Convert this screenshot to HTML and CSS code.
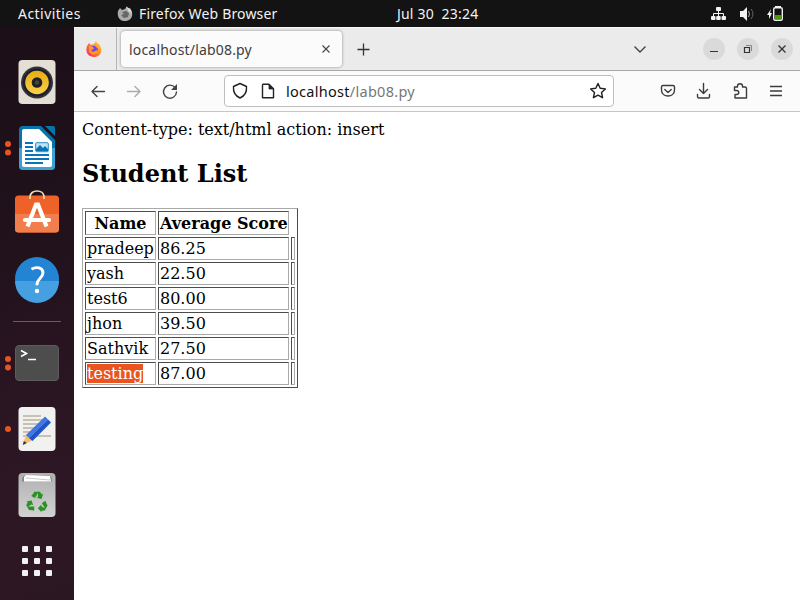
FILE: index.html
```html
<!DOCTYPE html>
<html lang="en">
<head>
<meta charset="utf-8">
<title>localhost/lab08.py</title>
<link rel="stylesheet" href="styles.css">
</head>
<body>
<header class="topbar">
  <span class="activities">Activities</span>
  <svg class="app-icon" width="16" height="16" viewBox="0 0 16 16"><path fill="#aaa" d="M1 5 3 2l2 2 3-1 2-3 1 3 2-1c5 7 1 13-5 13C2 15 0 10 1 5Z"/><path fill="#666" d="m5 6 4-1 3 2-1 4-4 1-3-3 3-1Z"/><path fill="#ddd" d="m9 1 2 3 1 3 1-2 1 4C16 5 13 2 9 1Z"/></svg>
  <span class="app-name">Firefox Web Browser</span>
  <span class="clock">Jul 30&nbsp; 23:24</span>
  <svg class="tray" width="76" height="18" viewBox="0 0 76 18">
    <g fill="#f2f2f2"><rect x="5" y="2" width="5" height="4" rx="1"/><rect y="11" width="4.500" height="4" rx="1"/><rect x="5.200" y="11" width="4.500" height="4" rx="1"/><rect x="10.500" y="11" width="4.500" height="4" rx="1"/><path d="M29 6h3l4-4v14l-4-4h-3Z"/><path d="m60 4-4 6h2v4l3-6h-2Z"/></g>
    <path fill="none" stroke="#f2f2f2" d="M7.500 5v6M2.500 11V8.500h10V11"/>
    <path fill="none" stroke="#aaa" d="M37.500 6q2 3 0 6"/><path fill="none" stroke="#666" d="M40 4q4 5 0 10"/>
    <path fill="#f2f2f2" d="M64 1h6v2h-6z"/><rect x="62.700" y="2.700" width="8.600" height="12.600" rx="1.500" fill="none" stroke="#f2f2f2" stroke-width="1.400"/><path fill="#4e9a06" d="M64 10h6v4h-6z"/>
  </svg>
</header>
<div class="desktop">
<nav class="dock">
  <svg class="launcher" viewBox="0 0 74 44"><defs><linearGradient id="gold" x2="0" y2="1"><stop stop-color="#e6ad12"/><stop offset="1" stop-color="#f9d14c"/></linearGradient></defs><rect x="18.500" y="0" width="37" height="44" rx="4" fill="#e3dfd4"/><circle cx="37" cy="22.500" r="16" fill="#34323a"/><circle cx="37" cy="22.500" r="14" fill="#1c202c"/><circle cx="37" cy="22.500" r="11.800" fill="url(#gold)"/><circle cx="37" cy="22.500" r="5.300" fill="#202020"/><circle cx="37" cy="22.500" r="2.200" fill="#454545"/></svg>
  <svg class="launcher" viewBox="0 0 74 44"><g fill="#e95420"><circle cx="8" cy="18" r="3"/><circle cx="8" cy="26.500" r="3"/></g><path fill="#0875aa" d="M23 0h18l14 14v26q0 4-4 4H23q-4 0-4-4V4q0-4 4-4Z"/><path fill="#38a3d4" d="M19 22h36v18q0 4-4 4H23q-4 0-4-4Z"/><path fill="#fff" d="M24 3h15l13 13v23q0 2-2 2H24q-2 0-2-2V5q0-2 2-2Z"/><path fill="#0875aa" d="M45 0h8q2 0 2 2v8Z"/><path stroke="#0875b8" stroke-width="2" d="M25 17h8m-8 4h8m-8 4h8m-8 4h24m-24 4h24m-24 4h18"/><rect x="35.700" y="16.700" width="12.600" height="9" rx="1" fill="#c2e3f4" stroke="#278bc0"/><path fill="#0875b8" d="m36 25v-2l4-4 3 3 2-2 3 3v2Z"/></svg>
  <svg class="launcher" viewBox="0 0 74 44"><g transform="translate(0 -2)"><rect x="15" y="5.500" width="44" height="37" rx="3.500" fill="#ee6229"/><path fill="#f27d4d" d="M15 24h44v15q0 3.500-3.500 3.500h-37Q15 42.500 15 39Z"/><path fill="none" stroke="#f5ddb0" stroke-width="1.700" d="M30 9V7c0-8 14-8 14 0v2"/><g fill="none" stroke="#fff" stroke-width="4.200"><path d="m27.500 36.500 8.500-22h2l8.500 22"/><path stroke-linecap="round" d="M25 30h24"/></g></g></svg>
  <svg class="launcher" viewBox="0 0 74 44"><g transform="translate(0 -1)"><circle cx="37" cy="22" r="22" fill="#2484d4"/><path d="M15 24a22 22 0 0 0 44 0Z" fill="#45a0e1"/><path fill="none" stroke="#fff" stroke-width="2.900" d="M31.500 12.200c5-3 11.500-1.600 11.500 3.500 0 5-6 6-6 11.500v1"/><circle cx="37" cy="34" r="2.200" fill="#fff"/></g></svg>
  <div class="separator"></div>
  <svg class="launcher" viewBox="0 0 74 44"><g fill="#e95420"><circle cx="8" cy="18" r="3"/><circle cx="8" cy="26.500" r="3"/></g><rect x="15.500" y="4.500" width="43" height="35" rx="3.500" fill="#4d4d4d" stroke="#5c5c5c"/><path fill="none" stroke="#fff" stroke-width="1.600" d="m21 9.500 5.500 3-5.500 3M28 18.500h8"/></svg>
  <svg class="launcher" viewBox="0 0 74 44"><circle cx="8" cy="22" r="3" fill="#e95420"/><rect x="18.500" y="0" width="37" height="44" rx="4" fill="#f1f1f0"/><path stroke="#c5c2b5" stroke-width="2" d="M23 9h18m-18 4h22m-22 4h20m-20 4h20m-20 4h15m-15 4h28"/><path fill="#f3bd76" d="m26 27-3 11 10-5Z"/><path fill="#333" d="m23.800 34-1 4 4-2Z"/><path fill="#3f76e6" d="m26 28 19-18.500 3 3L29 31Z"/><path fill="#1f54c8" d="M29 31 48 12.500l3 3L32.500 34Z"/></svg>
  <svg class="launcher" viewBox="0 0 74 44"><defs><linearGradient id="bin" x2="0" y2="1"><stop stop-color="#b0b0b0"/><stop offset="1" stop-color="#d2d2d2"/></linearGradient></defs><rect x="18.500" y="0" width="37" height="44" rx="4" fill="url(#bin)"/><path fill="#858585" d="M22 8.500q0-6 3-6h24q3 0 3 6Z"/><path fill="#fff" d="M24 8.500V4l2-2 24 1 1 5.500Z"/><path fill="none" stroke="#bbb" stroke-width=".8" d="m26 5 24 2"/>
    <g fill="#2a9224"><g id="arm"><path d="m32.600 21.500 1.800-2.700h4.200l-3.600 6.300-3.800-2.200Z"/><path d="M38 18.800h2l1.800 2.700 1.400-.8-1.700 5.200-5-1.100 1.500-.9Z"/></g><use href="#arm" transform="rotate(120 37 29.500)"/><use href="#arm" transform="rotate(240 37 29.500)"/></g></svg>
  <svg class="launcher" viewBox="0 0 74 44"><g fill="#f2f2f2"><rect x="22" y="7" width="6" height="6" rx="1"/><rect x="34" y="7" width="6" height="6" rx="1"/><rect x="46" y="7" width="6" height="6" rx="1"/><rect x="22" y="19" width="6" height="6" rx="1"/><rect x="34" y="19" width="6" height="6" rx="1"/><rect x="46" y="19" width="6" height="6" rx="1"/><rect x="22" y="31" width="6" height="6" rx="1"/><rect x="34" y="31" width="6" height="6" rx="1"/><rect x="46" y="31" width="6" height="6" rx="1"/></g></svg>
</nav>
<main class="browser">
  <div class="tabstrip">
    <div class="pinned"><svg width="16" height="16" viewBox="0 0 16 16"><defs><linearGradient id="fox" x1="1" x2="0" y2="1"><stop stop-color="#ffe43b"/><stop offset=".45" stop-color="#ff842b"/><stop offset="1" stop-color="#f51c67"/></linearGradient></defs><path fill="url(#fox)" d="M1 5 3 2l2 2 3-1 2-3 1 2 2 1c5 7 1 13-5 13C2 16-1 11 1 5Z"/><path fill="#7545dc" d="m6 5 3 0 3 3-2 4-4 0-2-3 3-1Z"/><path fill="#ff9828" d="m3 5 4 1 1 2-3 1 2 2 4-2 1 3-5 2-4-3Z"/></svg></div>
    <div class="tab"><span class="tab-title">localhost/lab08.py</span><svg width="10" height="10" viewBox="0 0 10 10"><path d="m1.500 1.500 7 7m0-7-7 7" stroke="#444" stroke-width="1.100"/></svg></div>
    <svg class="newtab" width="14" height="14" viewBox="0 0 14 14"><path d="M7.500 1.500v12M1.500 7.500h12" stroke="#333" stroke-width="1.300"/></svg>
    <svg class="alltabs" width="14" height="9" viewBox="0 0 14 9"><path d="m1.500 1.500 5.500 5.500 5.500-5.500" fill="none" stroke="#444" stroke-width="1.400"/></svg>
    <div class="window-buttons">
      <span class="wbtn"><svg viewBox="0 0 22 22"><path d="M7 13.500h8" stroke="#333"/></svg></span>
      <span class="wbtn"><svg viewBox="0 0 22 22"><path d="M7.500 9.500h5v5h-5Z" fill="none" stroke="#333" stroke-width="1.200"/><path d="M9 7.500h5.500V13" fill="none" stroke="#888"/></svg></span>
      <span class="wbtn"><svg viewBox="0 0 22 22"><path d="m7.500 7.500 7 7m0-7-7 7" stroke="#333" stroke-width="1.300"/></svg></span>
    </div>
  </div>
  <div class="toolbar">
    <svg class="nav-icons" width="90" height="18" viewBox="0 0 90 18" fill="none" stroke="#444" stroke-width="1.400" stroke-linecap="round" stroke-linejoin="round"><path d="M14.500 9.500H2m5-5-5 5 5 5"/><path stroke="#aaa" d="M37.500 9.500H50m-5-5 5 5-5 5"/><path d="M86.500 10a6.500 6.500 0 1 1-1.500-4.500"/><path fill="#444" stroke="none" d="M87 2v6h-6Z"/></svg>
    <div class="urlbar">
      <svg class="shield" width="44" height="18" viewBox="0 0 44 18" fill="none" stroke="#222" stroke-width="1.400" stroke-linejoin="round"><path d="M8 1.500 14.500 4.500C15 10 12.500 14 8 16 3.500 14 1 10 1.500 4.500Z"/><path d="M31 2.200h6l4.500 4.500v9H30.500V3Z"/><path fill="#222" stroke-width=".8" d="M37 2.500v4.500h4.500Z"/></svg>
      <span class="url"><b>localhost</b>/lab08.py</span>
      <svg class="star" width="18" height="18" viewBox="0 0 18 18"><path d="m9 1.500 2.200 4.800 5.200.6-3.900 3.600 1.100 5.200L9 13.100l-4.600 2.600 1.100-5.200L1.600 6.900l5.200-.6Z" fill="none" stroke="#222" stroke-width="1.400" stroke-linejoin="round"/></svg>
    </div>
    <svg class="tool-icons" width="124" height="18" viewBox="0 0 124 18" fill="none" stroke="#3c3c3c" stroke-width="1.400" stroke-linecap="round" stroke-linejoin="round"><path d="M3 3.500h10q1.500 0 1.500 1.500v3c0 8-13 8-13 0v-3Q1.500 3.500 3 3.500Z"/><path d="m4.800 7.500 3.200 3 3.200-3"/><path d="M43.500 1.500v10m-4-4 4 4 4-4M37.500 12.500v2q0 1.500 1.500 1.500h9q1.500 0 1.500-1.500v-2"/><path d="M74.500 5h3V4c0-3 5-3 5 0v1h2.500q1.500 0 1.500 1.500V16H75v-3.500h1.500c3 0 3-4 0-4H74.500Z"/><path stroke-linecap="butt" d="M110 4.500h12m-12 4.500h12m-12 4.500h12"/></svg>
  </div>
  <section class="page">
    <p class="intro">Content-type: text/html action: insert</p>
    <h2 class="heading">Student List</h2>
    <table class="scores">
      <colgroup><col class="c-name"><col class="c-score"><col class="c-empty"></colgroup>
      <tr class="head"><th>Name</th><th>Average Score</th></tr>
      <tr><td>pradeep</td><td>86.25</td><td></td></tr>
      <tr><td>yash</td><td>22.50</td><td></td></tr>
      <tr><td>test6</td><td>80.00</td><td></td></tr>
      <tr><td>jhon</td><td>39.50</td><td></td></tr>
      <tr><td>Sathvik</td><td>27.50</td><td></td></tr>
      <tr><td><span class="selected">testing</span></td><td>87.00</td><td></td></tr>
    </table>
  </section>
</main>
</div>
</body>
</html>
```
FILE: styles.css
```css
* { box-sizing: border-box; }
body {
  margin: 0;
  width: 800px;
  height: 600px;
  overflow: hidden;
  display: flex;
  flex-direction: column;
  font-family: "Noto Sans", sans-serif;
  background: #fff;
}
svg { display: block; flex: none; }
span { white-space: nowrap; }

.topbar {
  height: 27px;
  flex: none;
  display: flex;
  align-items: center;
  background: #131313;
  color: #f2f2f2;
  font-size: 14px;
  line-height: 27px;
}
.activities { width: 99px; padding-left: 18px; letter-spacing: .45px; }
.app-icon { margin-left: 18px; }
.app-name { width: 258px; margin-left: 6px; letter-spacing: .16px; }
.clock { width: 314px; letter-spacing: .2px; }
.desktop { flex: 1; min-height: 0; display: flex; }

.dock {
  width: 74px;
  flex: none;
  padding-top: 33px;
  display: flex;
  flex-direction: column;
  align-items: center;
  gap: 22px;
  background: linear-gradient(165deg, #1c0f18 0%, #21121c 40%, #2a1522 62%, #2e1724 80%, #2b1722 100%);
}
.launcher { width: 74px; height: 44px; overflow: visible; }
.separator { width: 48px; height: 1px; flex: none; margin: -3px 0; background: #69596a; }

.browser { flex: 1; min-width: 0; display: flex; flex-direction: column; }
.tabstrip {
  height: 44px;
  flex: none;
  display: flex;
  align-items: center;
  background: #ebebeb;
  border-top: 1px solid #f8f8f8;
  border-bottom: 1px solid #a8a8a8;
}
.pinned {
  width: 43px;
  height: 100%;
  padding-left: 12px;
  display: flex;
  align-items: center;
  border-right: 1px solid #b5b5b5;
}
.tab {
  width: 221px;
  height: 36px;
  margin-left: 4px;
  padding: 0 11px 0 8px;
  display: flex;
  align-items: center;
  justify-content: space-between;
  border-radius: 4px;
  background: #fbfbfb;
  box-shadow: 0 0 3px #888;
  color: #3d3d3d;
  font-size: 14px;
  letter-spacing: .18px;
}
.newtab { margin-left: 14px; }
.alltabs { margin-left: 263px; }
.window-buttons { display: flex; gap: 12px; margin-left: 56px; }
.wbtn { width: 22px; height: 22px; border-radius: 50%; background: #dadada; }

.toolbar {
  height: 41px;
  flex: none;
  display: flex;
  align-items: center;
  background: #fbfbfb;
  border-bottom: 1px solid #c6c6c6;
}
.nav-icons { margin-left: 16px; }
.urlbar {
  width: 390px;
  height: 32px;
  margin-left: 44px;
  padding: 0 6px 0 7px;
  display: flex;
  align-items: center;
  border: 1px solid #bfbfbf;
  border-radius: 4px;
  background: #fff;
}
.url { flex: 1; margin-left: 10px; font-size: 14.5px; letter-spacing: .28px; color: #777; }
.url b { font-weight: 400; color: #111; }
.tool-icons { margin-left: 46px; }

.page { flex: 1; padding: 8px; background: #fff; font: 16px/19px "DejaVu Serif", serif; color: #000; }
.intro { margin: 0; }
.heading { margin: 21px 0 20px; font-size: 24px; line-height: 28px; }
.scores {
  width: 216px;
  table-layout: fixed;
  border: 1px solid;
  border-color: #aaa #4c4c4c #4c4c4c #aaa;
  border-spacing: 2px;
}
.scores th, .scores td {
  height: 23px;
  padding: 1px;
  border: 1px solid;
  border-color: #4c4c4c #aaa #aaa #4c4c4c;
  white-space: nowrap;
}
.scores .head th { height: 24px; }
.c-name { width: 71px; }
.c-score { width: 131px; }
.c-empty { width: 4px; }
.selected { background: #e95420; color: #fff; }
```
